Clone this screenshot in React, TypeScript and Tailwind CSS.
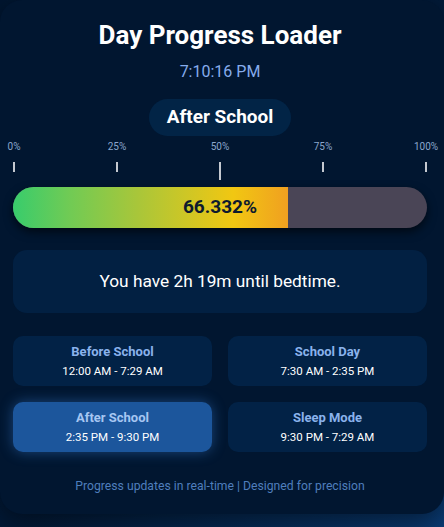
const periods = [
  { name: "Before School", range: "12:00 AM - 7:29 AM", active: false },
  { name: "School Day", range: "7:30 AM - 2:35 PM", active: false },
  { name: "After School", range: "2:35 PM - 9:30 PM", active: true },
  { name: "Sleep Mode", range: "9:30 PM - 7:29 AM", active: false },
]

const marks = ["0%", "25%", "50%", "75%", "100%"]

const App = () => {
  const progress = 66.332

  return (
    <div className="min-h-screen bg-gradient-to-br from-[#011630] via-[#021a38] to-[#0a3d78] font-['Roboto',sans-serif]">
      <div className="w-full rounded-[22px] bg-[#011630] pl-[13px] pr-[17px] pt-[19px] pb-[20px] shadow-[0_10px_30px_rgba(0,0,0,0.5)] flex flex-col items-center">
        {/* Header */}
        <h1 className="text-[26px] leading-8 font-bold text-white">Day Progress Loader</h1>
        <div className="mt-[9px] text-base leading-6 text-[#86acec]">7:10:16 PM</div>
        <div className="mt-[15px] h-[37px] px-[18px] rounded-full bg-[#022446] flex items-center text-[19px] font-bold text-white">
          After School
        </div>

        {/* Scale */}
        <div className="mt-[4px] w-full px-px flex justify-between items-start h-[40px]">
          {marks.map((m) => (
            <div key={m} className="w-0 flex flex-col items-center">
              <span className="text-[10px] leading-[14px] text-[#8aa6cc] whitespace-nowrap">{m}</span>
              <div className={`mt-[8px] w-[2px] bg-[#c4c9d0] ${m === "50%" ? "h-[18px]" : "h-[10px]"}`}></div>
            </div>
          ))}
        </div>

        {/* Progress bar */}
        <div className="mt-[7px] relative w-full h-[41px] rounded-full bg-[#4a4556] overflow-hidden shadow-[0_4px_10px_rgba(0,0,0,0.6)]">
          <div
            className="h-full bg-[linear-gradient(90deg,#38cc6c_0%,#6fcb55_20%,#a8c63a_45%,#f1c712_80%,#f0a020_100%)]"
            style={{ width: `${progress}%` }}
          ></div>
          <div className="absolute inset-0 flex items-center justify-center text-[19px] font-bold text-[#0d1a2e]">
            {progress.toFixed(3)}%
          </div>
        </div>

        {/* Time left */}
        <div className="mt-[22px] w-full h-[63px] rounded-[14px] bg-[#022042] flex items-center justify-center text-[17.3px] text-white">
          You have 2h 19m until bedtime.
        </div>

        {/* Periods */}
        <div className="mt-[23px] w-full grid grid-cols-2 gap-4">
          {periods.map((p) => (
            <div
              key={p.name}
              className={`h-[50px] rounded-[10px] flex flex-col items-center justify-center ${
                p.active ? "bg-[#1c569c] shadow-[0_0_14px_rgba(60,130,220,0.45)]" : "bg-[#022246]"
              }`}
            >
              <span className={`text-[13px] leading-[17px] font-bold ${p.active ? "text-[#a6c6f2]" : "text-[#8ab2ec]"}`}>
                {p.name}
              </span>
              <span className="mt-[3px] text-[11.5px] leading-4 text-white">{p.range}</span>
            </div>
          ))}
        </div>

        <p className="mt-[26px] text-[12.2px] leading-4 text-[#4f7ebc]">
          Progress updates in real-time | Designed for precision
        </p>
      </div>
    </div>
  )
}

export default App
